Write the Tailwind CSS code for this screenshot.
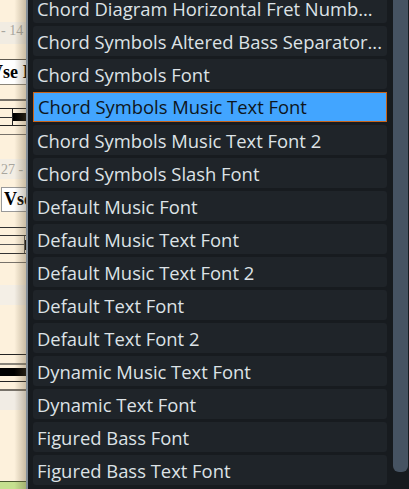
<!DOCTYPE html>
<html lang="en">
<head>
    <meta charset="UTF-8">
    <title>Chord Symbols Font List</title>
    <script src="https://cdn.jsdelivr.net/npm/@tailwindcss/browser@4"></script>
</head>
<body class="bg-[#171b1f]">
    <div class="flex h-[489px] w-[409px] overflow-hidden">

        <!-- score page behind the popup -->
        <div class="relative w-[26px] shrink-0 overflow-hidden bg-[#fdf1dc] font-['Liberation_Serif',serif]">
            <div class="h-[22px]"></div>
            <div class="flex h-[22px] items-center whitespace-nowrap bg-[#f1ece2] pb-[5px] pl-[1px] text-[14px] text-[#a8a69e]">- 14</div>
            <div class="h-[15px]"></div>
            <div class="h-px bg-[#5f5a50]"></div>
            <div class="flex h-[24px] items-center overflow-hidden whitespace-nowrap bg-white text-[18px] font-bold text-black"><span class="-ml-[10px]">Vse I</span></div>
            <div class="h-px bg-[#8a857a]"></div>
            <div class="h-[14px]"></div>
            <div class="h-[2px] bg-[#77726a]"></div>
            <div class="h-[7px]"></div>
            <div class="h-px bg-[#222]"></div>
            <div class="relative h-[16px]">
                <div class="absolute left-[12px] top-0 h-full w-px bg-[#222]"></div>
                <div class="absolute left-0 top-[8px] h-px w-full bg-[#333]"></div>
                <div class="absolute left-[13px] top-[4px] h-[8px] w-[13px] bg-black"></div>
            </div>
            <div class="h-px bg-[#222]"></div>
            <div class="h-[8px]"></div>
            <div class="h-px bg-[#77726a]"></div>
            <div class="h-[24px]"></div>
            <div class="flex h-[20px] items-center whitespace-nowrap bg-[#f3eee4] pl-[1px] text-[14px] text-[#a8a69e]">27 - 15</div>
            <div class="h-[8px]"></div>
            <div class="ml-[1px] flex h-[25px] items-center overflow-hidden whitespace-nowrap border border-r-0 border-[#999] bg-white pl-[2px] text-[18px] font-bold text-black">Vse</div>
            <div class="h-[15px]"></div>
            <div class="h-px bg-[#333]"></div>
            <div class="h-[7px]"></div>
            <div class="h-px bg-[#333]"></div>
            <div class="relative h-[17px]">
                <div class="absolute left-0 top-[8px] h-px w-full bg-[#555]"></div>
                <div class="absolute left-[24px] top-0 h-full w-px bg-[#555]"></div>
                <div class="absolute left-[25px] top-[4px] h-[10px] w-px bg-black"></div>
            </div>
            <div class="h-px bg-[#333]"></div>
            <div class="h-[8px]"></div>
            <div class="h-px bg-[#77726a]"></div>
            <div class="h-[22px]"></div>
            <div class="h-[20px] bg-[#f4efe6]"></div>
            <div class="h-[49px]"></div>
            <div class="h-px bg-[#222]"></div>
            <div class="h-[8px]"></div>
            <div class="h-[2px] bg-[#8a857a]"></div>
            <div class="h-[3px]"></div>
            <div class="h-[8px] bg-black"></div>
            <div class="h-[5px]"></div>
            <div class="h-px bg-[#222]"></div>
            <div class="h-[7px]"></div>
            <div class="h-[2px] bg-[#77726a]"></div>
            <div class="h-[19px] bg-[#f1ece4]"></div>
            <div class="h-[71px]"></div>
            <div class="h-px bg-[#4a5a30]"></div>
            <div class="h-[7px] bg-[#c5e08f]"></div>
            <div class="absolute inset-0 bg-linear-to-r from-transparent from-55% to-[#6b5a3a]/35"></div>
        </div>

        <!-- font list popup -->
        <div class="flex min-w-0 flex-1 border-l-2 border-[#838e98] bg-[#171b1f] pl-[5px] font-['Open_Sans','Noto_Sans',sans-serif] text-[18.4px] text-[#dde2e6]">
            <div class="-mt-[7px] flex w-[354px] shrink-0 flex-col gap-[3px]">
                <div class="flex h-[30px] shrink-0 items-center overflow-hidden whitespace-nowrap rounded-[3px] bg-[#1f2429] pl-[4px] pt-[1px]">Chord Diagram Horizontal Fret Numb...</div>
                <div class="flex h-[30px] shrink-0 items-center overflow-hidden whitespace-nowrap rounded-[3px] bg-[#1f2429] pl-[4px] pt-[1px]">Chord Symbols Altered Bass Separator...</div>
                <div class="flex h-[30px] shrink-0 items-center overflow-hidden whitespace-nowrap rounded-[3px] bg-[#1f2429] pl-[4px] pt-[1px]">Chord Symbols Font</div>
                <div class="flex h-[30px] shrink-0 items-center overflow-hidden whitespace-nowrap border border-solid border-[#c8641a] bg-[#42a5ff] pl-[4px] text-[#0e1620]">Chord Symbols Music Text Font</div>
                <div class="flex h-[30px] shrink-0 items-center overflow-hidden whitespace-nowrap rounded-[3px] bg-[#1f2429] pl-[4px] pt-[1px]">Chord Symbols Music Text Font 2</div>
                <div class="flex h-[30px] shrink-0 items-center overflow-hidden whitespace-nowrap rounded-[3px] bg-[#1f2429] pl-[4px] pt-[1px]">Chord Symbols Slash Font</div>
                <div class="flex h-[30px] shrink-0 items-center overflow-hidden whitespace-nowrap rounded-[3px] bg-[#1f2429] pl-[4px] pt-[1px]">Default Music Font</div>
                <div class="flex h-[30px] shrink-0 items-center overflow-hidden whitespace-nowrap rounded-[3px] bg-[#1f2429] pl-[4px] pt-[1px]">Default Music Text Font</div>
                <div class="flex h-[30px] shrink-0 items-center overflow-hidden whitespace-nowrap rounded-[3px] bg-[#1f2429] pl-[4px] pt-[1px]">Default Music Text Font 2</div>
                <div class="flex h-[30px] shrink-0 items-center overflow-hidden whitespace-nowrap rounded-[3px] bg-[#1f2429] pl-[4px] pt-[1px]">Default Text Font</div>
                <div class="flex h-[30px] shrink-0 items-center overflow-hidden whitespace-nowrap rounded-[3px] bg-[#1f2429] pl-[4px] pt-[1px]">Default Text Font 2</div>
                <div class="flex h-[30px] shrink-0 items-center overflow-hidden whitespace-nowrap rounded-[3px] bg-[#1f2429] pl-[4px] pt-[1px]">Dynamic Music Text Font</div>
                <div class="flex h-[30px] shrink-0 items-center overflow-hidden whitespace-nowrap rounded-[3px] bg-[#1f2429] pl-[4px] pt-[1px]">Dynamic Text Font</div>
                <div class="flex h-[30px] shrink-0 items-center overflow-hidden whitespace-nowrap rounded-[3px] bg-[#1f2429] pl-[4px] pt-[1px]">Figured Bass Font</div>
                <div class="flex h-[30px] shrink-0 items-center overflow-hidden whitespace-nowrap rounded-[3px] bg-[#1f2429] pl-[4px] pt-[1px]">Figured Bass Text Font</div>
            </div>
            <div class="ml-[6px] h-[472px] w-[15px] shrink-0 rounded-b-[6px] bg-[#465362]"></div>
        </div>
    </div>
</body>
</html>
